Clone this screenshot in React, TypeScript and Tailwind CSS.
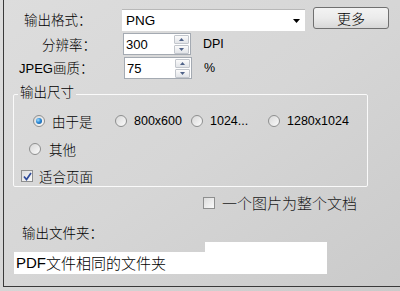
import React from 'react';

const cjk = { fontFamily: '"Noto Sans CJK SC", "Liberation Sans", sans-serif' };
const latin = { fontFamily: '"Liberation Sans", "Noto Sans CJK SC", sans-serif' };

const Radio = ({ checked = false }: { checked?: boolean }) => (
    <span className="w-[12px] h-[12px] rounded-full border border-[#8e8f8f] bg-gradient-to-br from-[#d8d8d8] to-[#fbfbfb] flex items-center justify-center shrink-0">
        {checked && (
            <span className="w-[6px] h-[6px] rounded-full bg-[radial-gradient(circle_at_35%_35%,#9fdcff_0%,#2d8ad6_45%,#0e4d8f_100%)]" />
        )}
    </span>
);

const Check = ({ checked = false }: { checked?: boolean }) => (
    <span className="w-[12px] h-[12px] border border-[#8e8f8f] bg-gradient-to-br from-[#dcdcdc] to-[#fafafa] flex items-center justify-center shrink-0">
        {checked && (
            <svg width="9" height="9" viewBox="0 0 9 9">
                <path d="M1 4.5 L3.5 7.5 L8 1" fill="none" stroke="#2f4b9a" strokeWidth="1.7" />
            </svg>
        )}
    </span>
);

const Spin = ({ value }: { value: string }) => (
    <div className="h-[22px] border border-[#a4aab2] bg-white flex items-center justify-between pl-[2px] pr-[1px]">
        <span className="text-[13px] leading-none text-black" style={latin}>{value}</span>
        <div className="flex flex-col gap-[1px] w-[15px]">
            {[0, 1].map((i) => (
                <div key={i} className="h-[9px] border border-[#c2c6cc] rounded-[1px] bg-gradient-to-b from-[#fbfbfb] to-[#e2e4e8] flex items-center justify-center">
                    <svg width="5" height="3" viewBox="0 0 5 3">
                        <path d={i === 0 ? 'M0 3 L2.5 0 L5 3 Z' : 'M0 0 L2.5 3 L5 0 Z'} fill="#4f6288" />
                    </svg>
                </div>
            ))}
        </div>
    </div>
);

export default function App() {
    return (
        <div className="w-[400px] h-[291px] overflow-hidden bg-gradient-to-br from-[#dddddd] via-[#d6d6d6] to-[#cacaca] text-black text-[13.5px] font-light" style={cjk}>
            <div className="ml-[3px] w-[420px] h-[287px] border-l border-b border-[#3a3a3a] pt-[7px]">
                {/* Format row */}
                <div className="flex h-[24px]">
                    <div className="w-[118px] pl-[20px] leading-[24px]">输出格式：</div>
                    <div className="mt-[2px] w-[183px] h-[22px] bg-white border-t border-[#b8b8b8] flex items-center justify-between pl-[4px] pr-[5px]">
                        <span className="text-[13.5px] leading-none font-normal" style={latin}>PNG</span>
                        <svg width="7" height="4" viewBox="0 0 7 4">
                            <path d="M0 0 L7 0 L3.5 4 Z" fill="#000" />
                        </svg>
                    </div>
                    <button className="ml-[8px] w-[76px] h-[22px] rounded-[3px] border border-[#707070] bg-gradient-to-b from-[#f3f3f3] via-[#ebebeb] to-[#d8d8d8] text-[14px] leading-none flex items-center justify-center">
                        更多
                    </button>
                </div>

                {/* DPI row */}
                <div className="flex items-center h-[22px] mt-[2px]">
                    <div className="w-[119px] pl-[38px]">分辨率：</div>
                    <div className="w-[68px]"><Spin value="300" /></div>
                    <span className="ml-[12px] text-[12.5px] font-normal" style={latin}>DPI</span>
                </div>

                {/* JPEG row */}
                <div className="flex items-center h-[22px] mt-[2px]">
                    <div className="w-[120px] pl-[15px]"><span style={latin} className="text-[13px] font-normal">JPEG</span>画质：</div>
                    <div className="w-[68px]"><Spin value="75" /></div>
                    <span className="ml-[12px] text-[12.5px] font-normal" style={latin}>%</span>
                </div>

                {/* Output size group */}
                <fieldset className="mt-[2px] ml-[9px] w-[355px] border border-[#fafafa] rounded-[2px]">
                    <legend className="ml-[4px] px-[2px] h-[26px] leading-[20px]">输出尺寸</legend>
                    <div className="flex items-center h-[20px] mt-[4px] pl-[19px]">
                        <label className="w-[82px] flex items-center gap-[7px]"><Radio checked />由于是</label>
                        <label className="w-[76px] flex items-center gap-[7px]"><Radio /><span style={latin} className="text-[12.5px] font-normal">800x600</span></label>
                        <label className="w-[77px] flex items-center gap-[7px]"><Radio /><span style={latin} className="text-[12.5px] font-normal">1024...</span></label>
                        <label className="flex items-center gap-[7px]"><Radio /><span style={latin} className="text-[12.5px] font-normal">1280x1024</span></label>
                    </div>
                    <div className="flex items-center h-[20px] mt-[8px] pl-[15px]">
                        <label className="flex items-center gap-[8px]"><Radio />其他</label>
                    </div>
                    <div className="flex items-center h-[20px] mt-[7px] pl-[7px]">
                        <label className="flex items-center gap-[6px]"><Check checked />适合页面</label>
                    </div>
                </fieldset>

                {/* One image per document */}
                <div className="flex items-center h-[18px] mt-[7px] ml-[199px]">
                    <label className="flex items-center gap-[7px] text-[15px] text-[#1a1a1a]"><Check />一个图片为整个文档</label>
                </div>

                {/* Output folder */}
                <div className="flex items-center h-[18px] mt-[11px] pl-[18px]">输出文件夹：</div>
                <div className="mt-[1px] ml-[201px] w-[122px] h-[10px] bg-white" />
                <div className="ml-[10px] w-[313px] h-[22px] bg-white flex items-center pl-[2px] text-[15px]">
                    <span style={latin} className="font-normal">PDF</span>文件相同的文件夹
                </div>
            </div>
        </div>
    );
}
